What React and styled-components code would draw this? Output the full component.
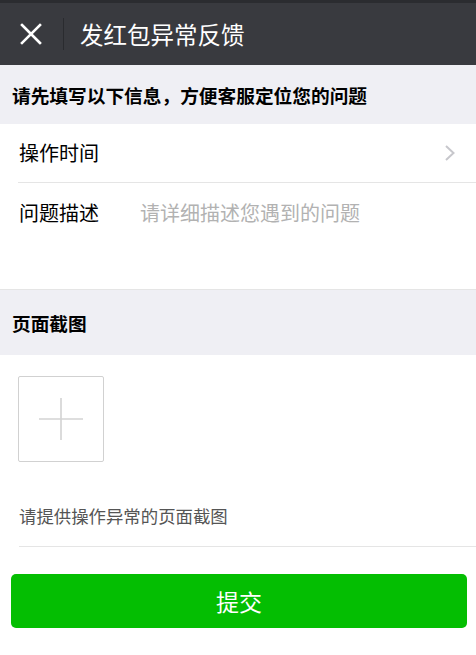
import React from 'react'
import styled, { createGlobalStyle } from 'styled-components'

const GlobalStyle = createGlobalStyle`
  html, body {
    margin: 0;
    padding: 0;
    background: #ffffff;
    font-family: "Noto Sans CJK SC", "Noto Sans", sans-serif;
  }
  * { box-sizing: border-box; }
`

const Page = styled.div`
  width: 476px;
  min-height: 655px;
  background: #ffffff;
  display: flex;
  flex-direction: column;
`

const TopBar = styled.header`
  height: 65px;
  background: #393a3f;
  border-top: 3px solid #2b2c30;
  display: flex;
  align-items: center;
  padding-left: 19px;
`

const CloseButton = styled.button`
  width: 23px;
  height: 23px;
  padding: 0;
  border: none;
  background: none;
  display: flex;
  align-items: center;
  justify-content: center;
  cursor: pointer;
`

const BarDivider = styled.div`
  width: 1px;
  height: 32px;
  background: #2a2b2f;
  margin: 0 16px 0 21px;
`

const Title = styled.h1`
  margin: 0;
  color: #ffffff;
  font-size: 23.5px;
  font-weight: 400;
`

const SectionHead = styled.div`
  height: ${p => p.$h}px;
  background: #efeff4;
  display: flex;
  align-items: center;
  padding-left: 12px;
  font-size: 18.7px;
  font-weight: 700;
  color: #000000;
  border-top: ${p => (p.$lined ? '1px solid #e5e5e5' : 'none')};
`

const Cells = styled.div`
  background: #ffffff;
  padding-left: 18px;
`

const Cell = styled.div`
  display: flex;
  align-items: ${p => (p.$top ? 'flex-start' : 'center')};
  height: ${p => p.$h}px;
  padding: ${p => (p.$top ? '15px' : '0')} 20px 0 1px;
  border-bottom: ${p => (p.$last ? 'none' : '1px solid #e5e5e5')};
`

const Label = styled.span`
  width: 121px;
  flex-shrink: 0;
  font-size: 20px;
  color: #000000;
  line-height: 30px;
`

const Placeholder = styled.span`
  flex: 1;
  font-size: 20px;
  color: #b2b2b2;
  line-height: 30px;
`

const Chevron = styled.svg`
  margin-left: auto;
`

const UploadArea = styled.div`
  padding-top: 21px;
`

const UploadBox = styled.button`
  width: 86px;
  height: 86px;
  border: 1px solid #d1d1d1;
  border-radius: 2px;
  background: #ffffff;
  padding: 0;
  display: flex;
  align-items: center;
  justify-content: center;
`

const Hint = styled.div`
  margin-top: 41px;
  margin-left: 1px;
  padding-bottom: 17px;
  font-size: 17.4px;
  color: #555555;
  line-height: 26px;
  border-bottom: 1px solid #e5e5e5;
`

const Footer = styled.div`
  padding: 27px 9px 0 11px;
`

const SubmitButton = styled.button`
  width: 100%;
  height: 54px;
  border: none;
  border-radius: 5px;
  background: #04be02;
  color: #ffffff;
  font-family: inherit;
  font-size: 23px;
  cursor: pointer;
`

export default function App() {
  return (
    <Page>
      <GlobalStyle />
      <TopBar>
        <CloseButton aria-label="关闭">
          <svg width="22" height="22" viewBox="0 0 22 22">
            <path d="M2 2 L20 20 M20 2 L2 20" stroke="#ffffff" strokeWidth="2.6" strokeLinecap="square" />
          </svg>
        </CloseButton>
        <BarDivider />
        <Title>发红包异常反馈</Title>
      </TopBar>

      <SectionHead $h={59}>请先填写以下信息，方便客服定位您的问题</SectionHead>

      <Cells>
        <Cell $h={59}>
          <Label>操作时间</Label>
          <Chevron width="12" height="18" viewBox="0 0 12 18">
            <path d="M2 2 L9.5 9 L2 16" fill="none" stroke="#c7c7cc" strokeWidth="2" />
          </Chevron>
        </Cell>
        <Cell $h={106} $top $last>
          <Label>问题描述</Label>
          <Placeholder>请详细描述您遇到的问题</Placeholder>
        </Cell>
      </Cells>

      <SectionHead $h={66} $lined>页面截图</SectionHead>

      <Cells>
        <UploadArea>
          <UploadBox aria-label="添加截图">
            <svg width="46" height="46" viewBox="0 0 46 46">
              <path d="M23 2 V44 M1 23 H45" stroke="#d3d3d3" strokeWidth="1.6" />
            </svg>
          </UploadBox>
        </UploadArea>
        <Hint>请提供操作异常的页面截图</Hint>
      </Cells>

      <Footer>
        <SubmitButton>提交</SubmitButton>
      </Footer>
    </Page>
  )
}
